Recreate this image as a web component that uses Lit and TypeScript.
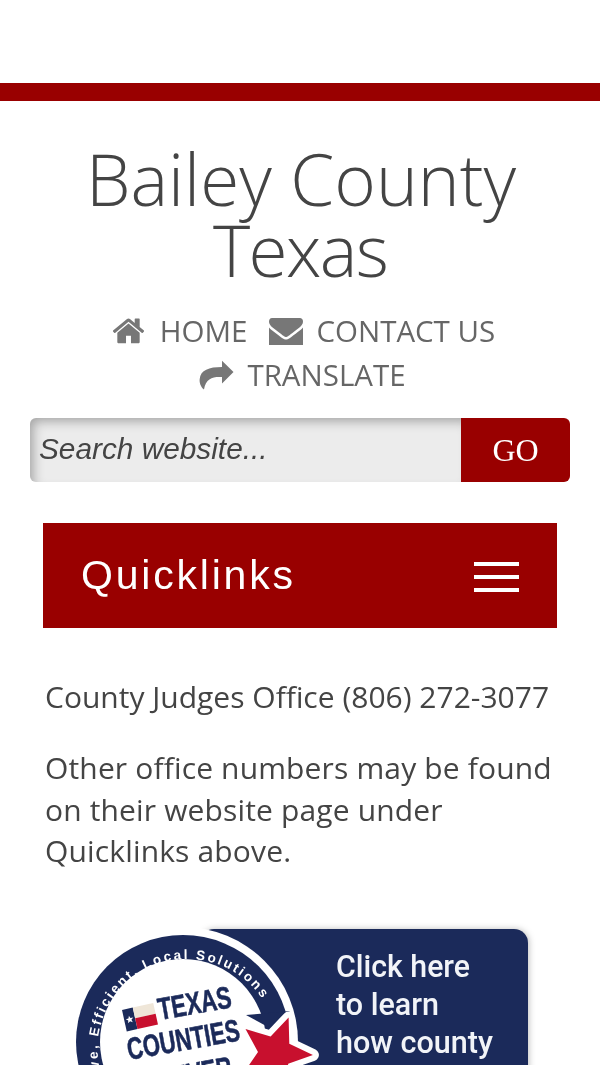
import { LitElement, html, css, svg } from "lit";
import { customElement } from "lit/decorators.js";

const HOME = "M1472 992v480q0 26-19 45t-45 19h-384v-384h-256v384h-384q-26 0-45-19t-19-45v-480q0-1 .5-3t.5-3l575-474 575 474q1 2 1 6zm223-69l-62 74q-8 9-21 11h-3q-13 0-21-7l-692-577-692 577q-12 8-24 7-13-2-21-11l-62-74q-8-10-7-23.5t11-21.5l719-599q32-26 76-26t76 26l244 204v-195q0-14 9-23t23-9h192q14 0 23 9t9 23v408l219 182q10 8 11 21.5t-7 23.5z";
const MAIL = "M1792 710v794q0 66-47 113t-113 47h-1472q-66 0-113-47t-47-113v-794q44 49 101 87 362 246 497 345 57 42 92.5 65.5t94.5 48 110 24.5h2q51 0 110-24.5t94.5-48 92.5-65.5q170-123 498-345 57-39 100-87zm0-294q0 79-49 151t-122 123q-376 261-468 325-10 7-42.5 30.5t-54 38-52 32.5-57.5 27-50 9h-2q-23 0-50-9t-57.5-27-52-32.5-54-38-42.5-30.5q-91-64-262-182.5t-205-142.5q-62-42-117-115.5t-55-136.5q0-78 41.5-130t118.5-52h1472q65 0 112.5 47t47.5 113z";
const SHARE = "M23 .8 L34.5 12 L23 23.5 V17 C14 16.5 7 18 5 29.5 C1.5 27 .2 22 .7 19 C1.5 10 10 7 23 7 Z";

const starPoints = (cx: number, cy: number, R: number, r: number, rot: number) => {
  const pts: string[] = [];
  for (let i = 0; i < 10; i++) {
    const a = ((rot + i * 36 - 90) * Math.PI) / 180;
    const d = i % 2 ? r : R;
    pts.push(`${(cx + d * Math.cos(a)).toFixed(1)},${(cy + d * Math.sin(a)).toFixed(1)}`);
  }
  return pts.join(" ");
};

@customElement("app-root")
export class AppRoot extends LitElement {
  static styles = css`
    :host {
      display: block;
      height: 1065px;
      overflow: hidden;
      background: #fff;
      font-family: "Open Sans", sans-serif;
      color: #444;
      filter: blur(0.4px);
    }
    .bar { height: 18px; margin-top: 83px; background: #990000; }
    h1 {
      margin: 42px 0 0;
      padding-left: 2px;
      text-align: center;
      font-weight: 300;
      font-size: 71px;
      line-height: 71px;
      color: #444;
    }
    h1 span { letter-spacing: -1.6px; margin-left: -2px; }
    nav {
      display: flex;
      flex-wrap: wrap;
      justify-content: center;
      margin-top: 24px;
      padding-left: 8px;
      font-size: 29.5px;
      line-height: 44px;
      color: #666;
    }
    nav a { display: flex; align-items: center; margin: 0 11px; }
    nav a.translate { margin-right: 14px; }
    nav .break { flex-basis: 100%; height: 0; }
    nav svg { fill: #777; display: block; flex: none; }
    .i-home { margin-right: 16px; }
    .i-mail { margin-right: 13px; }
    .i-share { margin-right: 13px; }
    .search {
      display: flex;
      height: 64px;
      margin: 21px 30px 0;
      border-radius: 6px;
      overflow: hidden;
    }
    .field {
      flex: 1;
      display: flex;
      align-items: center;
      padding: 0 0 2px 9px;
      background: #ececec;
      box-shadow: inset 6px 6px 12px -3px rgba(0, 0, 0, 0.32);
      font: italic 29.8px "Liberation Sans", sans-serif;
      color: #444;
    }
    .go {
      width: 109px;
      display: flex;
      align-items: center;
      justify-content: center;
      background: #990000;
      color: #fff;
      font: 32px "Liberation Serif", serif;
    }
    .quick {
      display: flex;
      align-items: center;
      justify-content: space-between;
      height: 105px;
      margin: 41px 43px 0;
      padding: 0 38px;
      background: #990000;
      color: #fff;
      font: 41px "Liberation Sans", sans-serif;
      letter-spacing: 2.8px;
    }
    .burger { display: flex; flex-direction: column; gap: 9px; width: 45px; margin-top: 3px; }
    .burger i { display: block; height: 4px; background: #fff; }
    .copy { margin: 48px 45px 0; font-size: 30px; line-height: 41px; color: #444; }
    .copy p { margin: 0 0 30px; }
    .copy .wide { letter-spacing: 0.15px; line-height: 41.5px; }
    .banner { display: block; margin-top: 53px; overflow: visible; }
    .shadow { filter: drop-shadow(1px 0 3px rgba(0, 0, 0, 0.25)); }
    .ring { font: 700 13.5px "Liberation Sans", sans-serif; letter-spacing: 2.2px; fill: #fff; }
    .seal { font: 700 31px "Liberation Sans", sans-serif; fill: #1b2a5a; stroke: #1b2a5a; stroke-width: 0.6px; }
    .cta { font: 500 32px Roboto, sans-serif; fill: #f2f4f8; }
  `;

  render() {
    return html`
      <div class="bar"></div>
      <h1>Bailey County<br /><span>Texas</span></h1>
      <nav>
        <a><svg class="i-home" width="31" height="31" viewBox="97 128 1598 1598"><path d=${HOME}></path></svg>HOME</a>
        <a><svg class="i-mail" width="34" height="27" viewBox="0 256 1792 1280" preserveAspectRatio="none"><path d=${MAIL}></path></svg>CONTACT US</a>
        <span class="break"></span>
        <a class="translate"><svg class="i-share" width="35" height="30" viewBox="0 0 35 30"><path d=${SHARE}></path></svg>TRANSLATE</a>
      </nav>
      <div class="search">
        <div class="field">Search website...</div>
        <div class="go">GO</div>
      </div>
      <div class="quick">
        <span>Quicklinks</span>
        <div class="burger"><i></i><i></i><i></i></div>
      </div>
      <div class="copy">
        <p>County Judges Office (806) 272-3077</p>
        <p class="wide">Other office numbers may be found on their website page under Quicklinks above.</p>
      </div>
      ${this.banner()}
    `;
  }

  banner() {
    // viewBox uses page coordinates so that the seal geometry stays readable.
    return html`<svg class="banner" width="600" height="140" viewBox="0 925 600 140">
      ${svg`
        <defs>
          <path id="arc" d="M 112 1098 A 90 90 0 1 1 263 1000"></path>
        </defs>
        <g class="shadow">
          <rect x="200" y="929" width="328" height="220" rx="14" fill="#1b2a5a"></rect>
        </g>
        <circle cx="183" cy="1042" r="115" fill="#fff"></circle>
        <circle cx="183" cy="1042" r="107" fill="#1b2a5a"></circle>
        <circle cx="183" cy="1042" r="83" fill="#fff"></circle>
        <path d="M 246 1015 L 290 1011 L 268 1027 Z" fill="#1b2a5a"></path>
        <text class="ring" text-anchor="end"><textPath href="#arc" startOffset="100%">Innovative, Efficient, Local Solutions</textPath></text>
        <polygon points=${starPoints(275, 1053, 38, 17, 21)} fill="#fff" stroke="#fff" stroke-width="12" stroke-linejoin="round"></polygon>
        <polygon points=${starPoints(275, 1053, 38, 17, 21)} fill="#c8102e"></polygon>
        <g transform="rotate(-12.5 122 1010)">
          <rect x="122" y="1010" width="11" height="22" fill="#1b2a5a"></rect>
          <rect x="133" y="1010" width="21" height="11" fill="#efe6d8"></rect>
          <rect x="133" y="1021" width="21" height="11" fill="#c8102e"></rect>
          <polygon points=${starPoints(127.5, 1021, 4, 1.7, 0)} fill="#fff"></polygon>
        </g>
        <g class="seal">
          <text x="160" y="1020" transform="rotate(-10 160 1020)" textLength="74" lengthAdjust="spacingAndGlyphs">TEXAS</text>
          <text x="129" y="1060" transform="rotate(-10 129 1060)" textLength="114" lengthAdjust="spacingAndGlyphs">COUNTIES</text>
          <text x="140" y="1094" transform="rotate(-10 140 1094)" textLength="95" lengthAdjust="spacingAndGlyphs">DELIVER</text>
        </g>
        <text class="cta" x="336" y="977" textLength="134" lengthAdjust="spacingAndGlyphs">Click here</text>
        <text class="cta" x="336" y="1015" textLength="103" lengthAdjust="spacingAndGlyphs">to learn</text>
        <text class="cta" x="336" y="1053" textLength="157" lengthAdjust="spacingAndGlyphs">how county</text>
      `}
    </svg>`;
  }
}
